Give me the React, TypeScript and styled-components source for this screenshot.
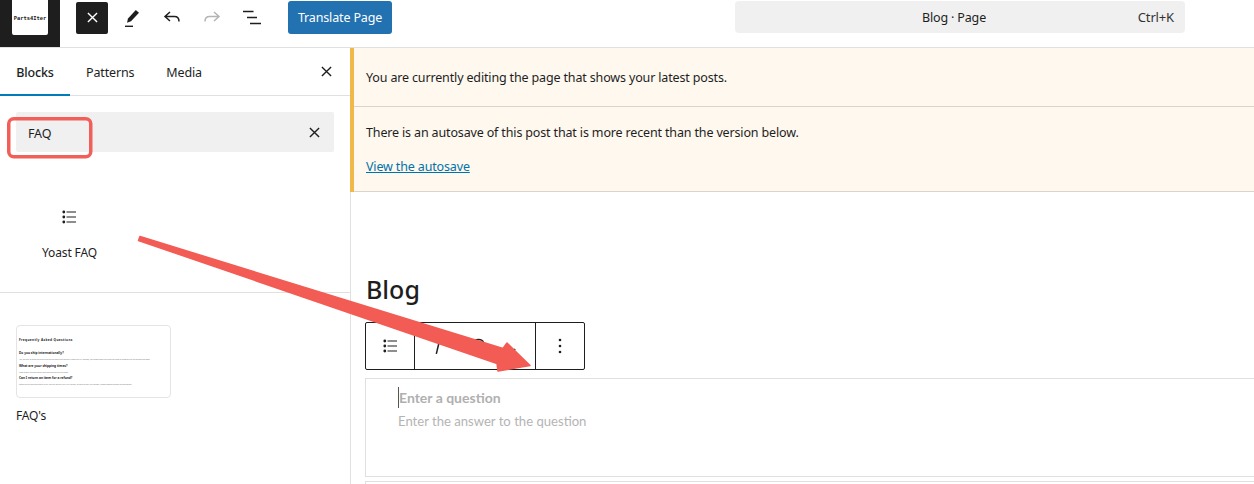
import React from "react";
import styled, { createGlobalStyle } from "styled-components";

const GlobalStyle = createGlobalStyle`
  html, body {
    margin: 0;
    padding: 0;
    background: #fff;
    overflow: hidden;
  }
  * {
    box-sizing: border-box;
  }
`;

const FONT = `"Noto Sans", "Open Sans", sans-serif`;

const Page = styled.div`
  position: relative;
  width: 1254px;
  height: 484px;
  overflow: hidden;
  font-family: ${FONT};
  font-size: 12.5px;
  letter-spacing: -0.15px;
  color: #1e1e1e;
  background: #fff;
`;

const Header = styled.header`
  display: flex;
  align-items: flex-start;
  height: 48px;
  border-bottom: 1px solid #e0e0e0;
`;

const LogoBox = styled.div`
  width: 60px;
  height: 47px;
  background: #1e1e1e;
  padding: 0 12px 12px;
`;

const LogoCard = styled.div`
  display: flex;
  align-items: center;
  justify-content: center;
  width: 36px;
  height: 35px;
  background: #fff;
  border-radius: 0 0 2px 2px;
  font-family: "DejaVu Sans Mono", monospace;
  font-size: 5.4px;
  font-weight: 700;
  letter-spacing: 0;
  color: #222;
`;

const Tools = styled.div`
  display: flex;
  align-items: center;
  height: 34px;
  margin-left: 16px;
  gap: 8px;
`;

const ToolButton = styled.button<{ $active?: boolean; $muted?: boolean }>`
  display: flex;
  align-items: center;
  justify-content: center;
  width: 32px;
  height: 32px;
  margin-top: 1px;
  padding: 0;
  border: none;
  border-radius: 2px;
  background: ${({ $active }) => ($active ? "#1e1e1e" : "transparent")};
  color: ${({ $active, $muted }) =>
    $active ? "#fff" : $muted ? "#b4b4b4" : "#1e1e1e"};
`;

const TranslateButton = styled.button`
  width: 104px;
  height: 33px;
  margin: 1px 0 0 20px;
  padding: 0;
  border: none;
  border-radius: 3px;
  background: #2271b1;
  color: #fff;
  font-family: ${FONT};
  font-size: 12.5px;
  letter-spacing: -0.15px;
`;

const CommandBar = styled.div`
  position: relative;
  display: flex;
  align-items: center;
  justify-content: center;
  width: 450px;
  height: 32px;
  margin: 1px 0 0 343px;
  padding-right: 12px;
  border-radius: 4px;
  background: #f0f0f0;
  font-size: 12.5px;
`;

const Shortcut = styled.span`
  position: absolute;
  right: 11px;
  font-size: 13px;
  color: #333;
`;

const Body = styled.div`
  display: flex;
  height: 436px;
`;

const Sidebar = styled.aside`
  flex: none;
  width: 351px;
  border-right: 1px solid #e0e0e0;
`;

const Tabs = styled.div`
  display: flex;
  align-items: stretch;
  height: 48px;
  border-bottom: 1px solid #e0e0e0;
`;

const Tab = styled.div<{ $selected?: boolean }>`
  display: flex;
  align-items: center;
  justify-content: center;
  width: ${({ $selected }) => ($selected ? "70px" : "auto")};
  margin-right: ${({ $selected }) => ($selected ? "16px" : "32px")};
  margin-bottom: -1px;
  padding-top: 2px;
  font-weight: ${({ $selected }) => ($selected ? 500 : 400)};
  border-bottom: 2px solid ${({ $selected }) => ($selected ? "#007cba" : "transparent")};
`;

const TabClose = styled.div`
  display: flex;
  align-items: center;
  margin-left: auto;
  padding-right: 18px;
`;

const SearchField = styled.div`
  display: flex;
  align-items: center;
  justify-content: space-between;
  height: 40px;
  margin: 16px 16px 0;
  padding: 2px 14px 0 12px;
  background: #f0f0f0;
  border-radius: 2px;
`;

const SearchClose = styled.span`
  display: flex;
  margin-top: -2px;
`;

const ResultBlock = styled.div`
  height: 141px;
  border-bottom: 1px solid #e0e0e0;
`;

const BlockItem = styled.div`
  display: flex;
  flex-direction: column;
  align-items: center;
  width: 107px;
  margin-left: 16px;
  padding-top: 58px;
  font-size: 12px;
`;

const BlockLabel = styled.span`
  margin-top: 20px;
`;

const PatternCard = styled.div`
  display: flex;
  flex-direction: column;
  gap: 2.5px;
  width: 155px;
  height: 73px;
  margin: 32px 0 0 16px;
  padding: 12px 2px 0;
  border: 1px solid #e4e4e4;
  border-radius: 4px;
`;

const PatternTitle = styled.div<{ $lead?: boolean }>`
  margin-bottom: ${({ $lead }) => ($lead ? "5.5px" : "0")};
  font-size: 3.2px;
  line-height: 5px;
  font-weight: 700;
  letter-spacing: ${({ $lead }) => ($lead ? "0.35px" : "0")};
  white-space: nowrap;
`;

const PatternLine = styled.div`
  margin-top: 3px;
  font-size: 1.8px;
  line-height: 2px;
  letter-spacing: 0;
  color: #777;
  white-space: nowrap;
`;

const PatternName = styled.div`
  margin: 9px 0 0 16px;
  font-size: 12px;
`;

const Content = styled.main`
  flex: 1;
  min-width: 0;
`;

const Notice = styled.div`
  margin-left: -1px;
  background: #fef8ee;
  border-left: 4px solid #f0b849;
`;

const NoticeRow = styled.div<{ $height: number; $top: number }>`
  height: ${({ $height }) => $height}px;
  padding: ${({ $top }) => $top}px 12px 0;
  border-bottom: 1px solid #d9d5cc;
  line-height: 22px;
`;

const NoticeLink = styled.a`
  display: block;
  margin-top: 12px;
  color: #0073aa;
  text-decoration: underline;
`;

const PageTitle = styled.h1`
  margin: 79px 0 0 15px;
  font-size: 25px;
  line-height: 36px;
  font-weight: 500;
  letter-spacing: 0;
`;

const BlockToolbar = styled.div`
  display: flex;
  width: 220px;
  height: 48px;
  margin: 15px 0 0 14px;
  border: 1px solid #1e1e1e;
  border-radius: 2px;
  background: #fff;
`;

const ToolbarGroup = styled.div<{ $width: number }>`
  display: flex;
  flex: none;
  align-items: center;
  justify-content: center;
  width: ${({ $width }) => $width}px;
  border-right: 1px solid #1e1e1e;
  &:last-child {
    border-right: none;
  }
`;

const FaqBox = styled.div`
  height: 99px;
  margin: 8px 0 0 14px;
  padding: 8px 32px;
  border: 1px solid #e0e0e0;
  border-right: none;
  font-family: "Lato", sans-serif;
  letter-spacing: 0;
`;

const Question = styled.div`
  width: fit-content;
  border-left: 1px solid #555;
  font-size: 14px;
  line-height: 21px;
  font-weight: 700;
  color: #b0b0b0;
`;

const Answer = styled.div`
  margin-top: 3px;
  font-size: 13.1px;
  line-height: 21px;
  color: #b4b4b4;
`;

const NextBox = styled.div`
  height: 10px;
  margin: 4px 0 0 14px;
  border: 1px solid #e0e0e0;
  border-right: none;
`;

const Annotations = styled.svg`
  position: absolute;
  top: 0;
  left: 0;
  pointer-events: none;
`;

const CloseIcon = ({ size = 12 }: { size?: number }) => (
  <svg width={size} height={size} viewBox="0 0 12 12" fill="none" stroke="currentColor" strokeWidth="1.5">
    <path d="M1 1 11 11M11 1 1 11" />
  </svg>
);

const ListViewIcon = () => (
  <svg width="20" height="20" viewBox="0 0 20 20" fill="none" stroke="#1e1e1e" strokeWidth="1.5">
    <path d="M1 3.500h10.500M5 9.500h10M8 15.500h11" />
  </svg>
);

const FaqListIcon = () => (
  <svg width="15" height="14" viewBox="0 0 15 14" fill="none">
    <g fill="#1e1e1e">
      <circle cx="1.800" cy="2" r="1.400" />
      <circle cx="1.800" cy="7" r="1.400" />
      <circle cx="1.800" cy="12" r="1.400" />
    </g>
    <path d="M4.500 2H14M4.500 7H14M4.500 12H14" stroke="#1e1e1e" strokeWidth="1.200" />
  </svg>
);

// Bold, italic, link and chevron sit mostly under the red arrow
const FormatIcons = () => (
  <svg width="121" height="46" viewBox="0 0 121 46" fill="none" stroke="#1e1e1e" strokeWidth="1.500">
    <path d="M24 20.500 21.500 31" />
    <path d="M59 19.500c1-4 9-4 10 0 .6 3-2 5-4 6" />
    <path d="M94 26l3.500 3.500L101 26" />
  </svg>
);

const patternRows = [
  {
    title: "Do you ship internationally?",
    text: "Yes, we ship to most countries around the world and delivery times vary by location, so please check the shipping page at checkout for the options we offer.",
  },
  {
    title: "What are your shipping times?",
    text: "Most orders are sent within two working days of the order.",
  },
  {
    title: "Can I return an item for a refund?",
    text: "Items can be returned within thirty days of delivery for a full refund, as long as they are unused. Please contact support to get started.",
  },
];

function App() {
  return (
    <Page>
      <GlobalStyle />
      <Header>
        <LogoBox>
          <LogoCard>Parts4Iter</LogoCard>
        </LogoBox>
        <Tools>
          <ToolButton $active aria-label="Close">
            <CloseIcon size={11} />
          </ToolButton>
          <ToolButton aria-label="Tools">
            <svg width="20" height="22" viewBox="0 0 20 22" fill="#1e1e1e">
              <path d="M13.800 3 17 5.800 9 14.200 5 15.800l1-4.400z" />
              <path d="M3 18.600h8v1.400H3z" />
            </svg>
          </ToolButton>
          <ToolButton aria-label="Undo">
            <svg width="20" height="18" viewBox="0 0 20 18" fill="none" stroke="currentColor" strokeWidth="1.500">
              <path d="M8 3 3 7.500l5 4.500M3 7.500h9.500c2.800 0 4.500 1.800 4.500 5" />
            </svg>
          </ToolButton>
          <ToolButton $muted aria-label="Redo">
            <svg width="20" height="18" viewBox="0 0 20 18" fill="none" stroke="currentColor" strokeWidth="1.500">
              <path d="M12 3l5 4.500-5 4.500M17 7.500H7.500C4.700 7.500 3 9.300 3 12.500" />
            </svg>
          </ToolButton>
          <ToolButton aria-label="Document overview">
            <ListViewIcon />
          </ToolButton>
        </Tools>
        <TranslateButton>Translate Page</TranslateButton>
        <CommandBar>
          Blog · Page
          <Shortcut>Ctrl+K</Shortcut>
        </CommandBar>
      </Header>
      <Body>
        <Sidebar>
          <Tabs>
            <Tab $selected>Blocks</Tab>
            <Tab>Patterns</Tab>
            <Tab>Media</Tab>
            <TabClose>
              <CloseIcon size={11} />
            </TabClose>
          </Tabs>
          <SearchField>
            FAQ
            <SearchClose>
              <CloseIcon size={11} />
            </SearchClose>
          </SearchField>
          <ResultBlock>
            <BlockItem>
              <FaqListIcon />
              <BlockLabel>Yoast FAQ</BlockLabel>
            </BlockItem>
          </ResultBlock>
          <PatternCard>
            <PatternTitle $lead>Frequently Asked Questions</PatternTitle>
            {patternRows.map((row) => (
              <div key={row.title}>
                <PatternTitle>{row.title}</PatternTitle>
                <PatternLine>{row.text}</PatternLine>
              </div>
            ))}
          </PatternCard>
          <PatternName>FAQ's</PatternName>
        </Sidebar>
        <Content>
          <Notice>
            <NoticeRow $height={59} $top={19}>You are currently editing the page that shows your latest posts.</NoticeRow>
            <NoticeRow $height={85} $top={15}>
              There is an autosave of this post that is more recent than the version below.
              <NoticeLink>View the autosave</NoticeLink>
            </NoticeRow>
          </Notice>
          <PageTitle>Blog</PageTitle>
          <BlockToolbar>
            <ToolbarGroup $width={49}>
              <FaqListIcon />
            </ToolbarGroup>
            <ToolbarGroup $width={121}>
              <FormatIcons />
            </ToolbarGroup>
            <ToolbarGroup $width={48}>
              <svg width="4" height="16" viewBox="0 0 4 16" fill="#1e1e1e">
                <circle cx="2" cy="2" r="1.300" />
                <circle cx="2" cy="8" r="1.300" />
                <circle cx="2" cy="14" r="1.300" />
              </svg>
            </ToolbarGroup>
          </BlockToolbar>
          <FaqBox>
            <Question>Enter a question</Question>
            <Answer>Enter the answer to the question</Answer>
          </FaqBox>
          <NextBox />
        </Content>
      </Body>
      <Annotations width="1254" height="484" viewBox="0 0 1254 484">
        <rect x="8.750" y="118.750" width="82" height="38" rx="5" fill="none" stroke="#f15f58" strokeWidth="3.500" />
        <path
          d="M140 236.500 138.500 240.500 497 363.500 498 371 530 365.500 507 343 503 348.500Z"
          fill="#f25c54"
          stroke="#f25c54"
          strokeWidth="1.500"
          strokeLinejoin="round"
        />
      </Annotations>
    </Page>
  );
}

export default App;
